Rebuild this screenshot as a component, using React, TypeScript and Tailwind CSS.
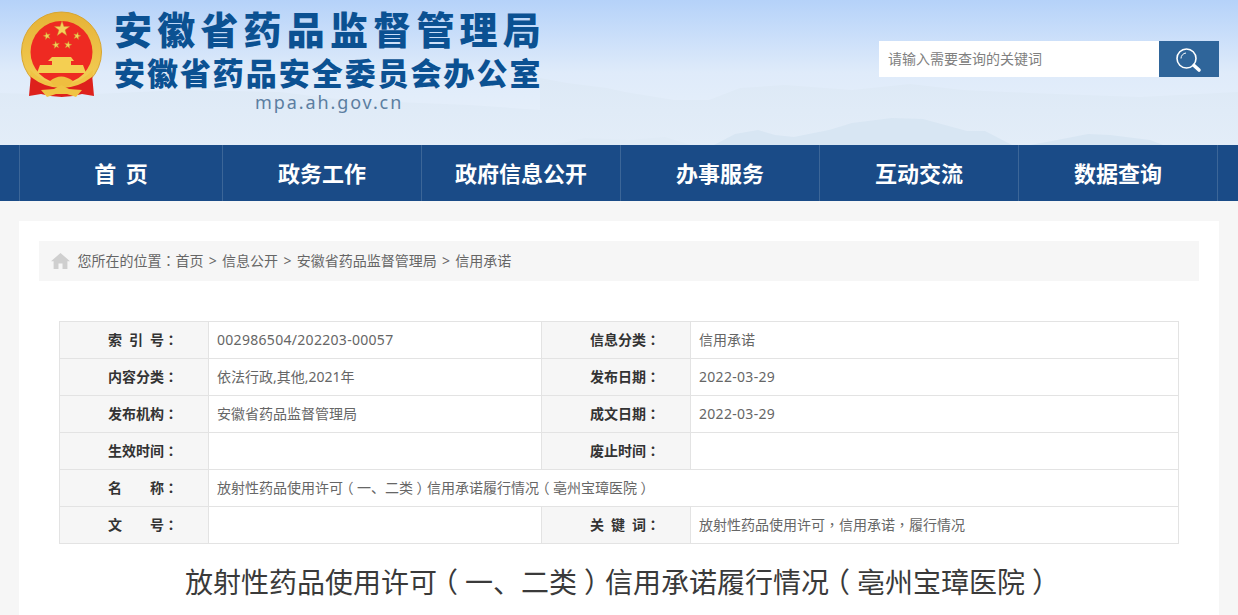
import { Fragment } from "react";

const font = "[font-family:'Noto_Sans','Noto_Sans_CJK_SC',sans-serif]";

const navItems = ["首 页", "政务工作", "政府信息公开", "办事服务", "互动交流", "数据查询"];

const crumbs = ["首页", "信息公开", "安徽省药品监督管理局", "信用承诺"];

// the reference sets full-width brackets and colons in the middle of their box
function Punct({ text }: { text: string }) {
    return (
        <>
            {text.split(/([（），：])/).map((part, i) => {
                if (i % 2 === 0) return part;
                if (part === "（" || part === "）") {
                    return <span key={i} className="px-[0.25em] [font-feature-settings:'halt']">{part}</span>;
                }
                return <span key={i} className="[font-family:'Noto_Sans_CJK_TC',sans-serif]">{part}</span>;
            })}
        </>
    );
}

function Star({ x, y, r, rotate = 0 }: { x: number; y: number; r: number; rotate?: number }) {
    const points = Array.from({ length: 10 }, (_, i) => {
        const a = (Math.PI / 5) * i - Math.PI / 2;
        const d = i % 2 === 0 ? r : r * 0.4;
        return `${(x + d * Math.cos(a)).toFixed(2)},${(y + d * Math.sin(a)).toFixed(2)}`;
    }).join(" ");
    return <polygon points={points} fill="#f5d25a" stroke="#c9932a" strokeWidth="0.4" transform={`rotate(${rotate} ${x} ${y})`} />;
}

function Emblem() {
    return (
        <svg width="84" height="88" viewBox="0 0 84 88" className="shrink-0">
            <defs>
                <linearGradient id="gold" x1="0" y1="0" x2="0" y2="1">
                    <stop offset="0" stopColor="#e6b236" />
                    <stop offset="1" stopColor="#f4d158" />
                </linearGradient>
            </defs>
            <circle cx="41.5" cy="42" r="40" fill="url(#gold)" stroke="#d8a530" strokeWidth="1" />
            <circle cx="41.5" cy="42" r="31" fill="#ee2a22" />
            <Star x={42} y={19} r={8} />
            <Star x={27} y={26} r={3.8} rotate={-15} />
            <Star x={57} y={26} r={3.8} rotate={15} />
            <Star x={36} y={35} r={3.8} rotate={-10} />
            <Star x={48} y={35} r={3.8} rotate={10} />
            <path d="M32 47 H51 L54 51 H51 V55 H32 V51 H28 Z" fill="#f4cf52" />
            <path d="M20 55 H63 L66 63 H17 Z" fill="#f4cf52" />
            <path d="M11 64 Q26 75 41.5 75 Q57 75 72 64 L74 86 L62 84 Q42 90 21 84 L9 86 Z" fill="#de211c" />
            <path d="M10 60 Q24 74 41.5 74 Q59 74 73 60 L72 67 Q58 78 41.5 78 Q25 78 11 67 Z" fill="#f0c445" />
            <path d="M30 71 Q41 62 53 71 L49 76 Q41 79 34 76 Z" fill="#efbe3f" />
            <path d="M21 80 L34 79 L41.5 75 L49 79 L62 80 L56 87 L47 84 H36 L27 87 Z" fill="#f0c445" />
        </svg>
    );
}

function Mountains() {
    return (
        <svg className="absolute inset-0 h-full w-full" viewBox="0 0 1238 145" preserveAspectRatio="none" aria-hidden="true">
            <defs>
                <linearGradient id="haze" x1="0" y1="0" x2="0" y2="1">
                    <stop offset="0" stopColor="#dde9f6" />
                    <stop offset="1" stopColor="#e3edf8" />
                </linearGradient>
            </defs>
            <path
                d="M0 93 L70 95 L186 90 L280 92 L345 100 L470 105 L540 110 L540 78 L567 83 L607 88 L625 92 L674 100 L709 100 L740 88 L785 85 L852 90 L910 84 L963 90 L1030 93 L1140 97 L1238 92 V145 H0 Z"
                fill="url(#haze)"
            />
            <path d="M553 145 L585 138 L629 140 L665 137 L691 145 Z" fill="#e0ebf6" />
            <path
                d="M714 145 L735 134 L758 130 L775 135 L794 137 L829 130 L852 123 L892 118 L923 119 L967 131 L985 131 L1012 145 Z"
                fill="#d8e6f3"
            />
            <path d="M1030 145 L1052 141 L1088 134 L1110 135 L1150 140 L1163 145 Z" fill="#d8e6f3" />
        </svg>
    );
}

function Label({ children }: { children: string }) {
    return (
        <td className="w-[149px] border border-[#e3e3e3] bg-[#f6f6f6] pb-[2px] pl-[48px] font-bold text-[#333]">
            <Punct text={children} />
        </td>
    );
}

function Value({ children = "", span, numeric }: { children?: string; span?: number; numeric?: boolean }) {
    return (
        <td colSpan={span} className={`border border-[#e3e3e3] pb-[2px] pl-[8px] text-[#666] ${numeric ? "tracking-[0.3px]" : ""}`}>
            <Punct text={children} />
        </td>
    );
}

export default function App() {
    return (
        <div className={`h-[615px] w-[1238px] overflow-hidden bg-[#f6f6f6] ${font}`}>
            <header className="relative h-[145px] bg-gradient-to-b from-[#b5d2f9] via-[#dfebfa] to-[#e9f1fa]">
                <Mountains />
                <div className="relative flex pl-[20px] pt-[10px]">
                    <Emblem />
                    <div className="ml-[10px] flex flex-col">
                        <div className="-mt-[6px] h-[50px] text-[38px] font-black leading-[50px] tracking-[5.2px] whitespace-nowrap text-[#0b5192]">
                            安徽省药品监督管理局
                        </div>
                        <div className="mt-[0.5px] h-[37px] text-[31px] font-black leading-[37px] tracking-[1.95px] whitespace-nowrap text-[#0b5192]">
                            安徽省药品安全委员会办公室
                        </div>
                        <div className="ml-[141px] mt-[0.5px] text-[18px] leading-[20px] tracking-[1.9px] text-[#5b7ea1]">mpa.ah.gov.cn</div>
                    </div>
                    <div className="ml-auto mr-[19px] mt-[31px] flex h-[36px] w-[340px]">
                        <div className="flex w-[280px] items-center bg-white pb-[2px] pl-[9px] text-[14px] text-[#808080]">请输入需要查询的关键词</div>
                        <div className="flex w-[60px] items-center justify-center bg-[#2f659a]">
                            <svg width="28" height="28" viewBox="0 0 28 28" fill="none">
                                <circle cx="11.5" cy="13.5" r="9.5" stroke="#fff" strokeWidth="1.6" />
                                <path d="M6 13.5 A5.5 5.5 0 0 1 11 8" stroke="#fff" strokeWidth="1" />
                                <path d="M19 20.5 L24 25" stroke="#fff" strokeWidth="3.6" strokeLinecap="round" />
                            </svg>
                        </div>
                    </div>
                </div>
            </header>

            <nav className="flex h-[56px] bg-[#1a4b87] pl-[19px]">
                {navItems.map((item, i) => (
                    <div
                        key={item}
                        className={`flex h-full items-center justify-center border-l border-[#3c6698] text-[22px] font-bold text-white [word-spacing:4px] ${
                            i === 0 ? "w-[203px]" : i === 5 ? "w-[200px] border-r" : "w-[199px]"
                        }`}
                    >
                        {item}
                    </div>
                ))}
            </nav>

            <main className="mx-[19px] mt-[20px] h-[500px] bg-white px-[20px] pt-[20px]">
                <div className="flex h-[40px] items-center bg-[#f6f6f6] pb-[2px] pl-[12px] text-[14px] text-[#666]">
                    <svg width="19" height="16" viewBox="0 0 19 16" className="mr-[7.5px] mt-[2px]">
                        <path d="M9.5 0 L19 8.2 H16.4 V16 H11.5 V10.5 H7.5 V16 H2.6 V8.2 H0 Z" fill="#cfcfcf" />
                    </svg>
                    <span>
                        <Punct text="您所在的位置：" />
                    </span>
                    {crumbs.map((crumb, i) => (
                        <Fragment key={crumb}>
                            {i > 0 && <span className="mx-[5.3px]">&gt;</span>}
                            <span>{crumb}</span>
                        </Fragment>
                    ))}
                </div>

                <table className="ml-[20px] mt-[40px] w-[1120px] table-fixed border-collapse text-[14px] [&_td]:h-[37px]">
                    <colgroup>
                        <col className="w-[149px]" />
                        <col className="w-[333px]" />
                        <col className="w-[149px]" />
                        <col />
                    </colgroup>
                    <tbody>
                        <tr>
                            <Label>{"索\u2002引\u2002号："}</Label>
                            <Value numeric>002986504/202203-00057</Value>
                            <Label>信息分类：</Label>
                            <Value>信用承诺</Value>
                        </tr>
                        <tr>
                            <Label>内容分类：</Label>
                            <Value>依法行政,其他,2021年</Value>
                            <Label>发布日期：</Label>
                            <Value numeric>2022-03-29</Value>
                        </tr>
                        <tr>
                            <Label>发布机构：</Label>
                            <Value>安徽省药品监督管理局</Value>
                            <Label>成文日期：</Label>
                            <Value numeric>2022-03-29</Value>
                        </tr>
                        <tr>
                            <Label>生效时间：</Label>
                            <Value />
                            <Label>废止时间：</Label>
                            <Value />
                        </tr>
                        <tr>
                            <Label>{"名\u2003\u2003称："}</Label>
                            <Value span={3}>放射性药品使用许可（一、二类）信用承诺履行情况（亳州宝璋医院）</Value>
                        </tr>
                        <tr>
                            <Label>{"文\u2003\u2003号："}</Label>
                            <Value />
                            <Label>{"关\u2002键\u2002词："}</Label>
                            <Value>放射性药品使用许可，信用承诺，履行情况</Value>
                        </tr>
                    </tbody>
                </table>

                <h1 className="mt-[18px] text-center text-[28px] leading-[40px] font-normal text-[#3a3a3a]">
                    <Punct text="放射性药品使用许可（一、二类）信用承诺履行情况（亳州宝璋医院）" />
                </h1>
            </main>
        </div>
    );
}
